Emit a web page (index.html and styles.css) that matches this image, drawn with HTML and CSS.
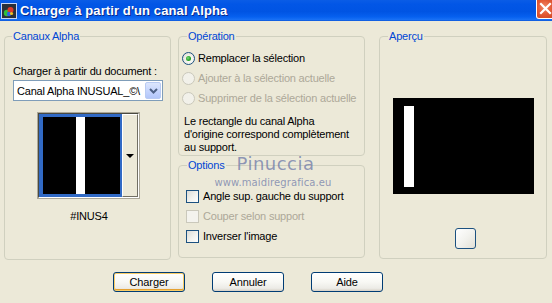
FILE: index.html
```html
<!DOCTYPE html>
<html lang="fr">
<head>
<meta charset="utf-8">
<title>Charger à partir d'un canal Alpha</title>
<link rel="stylesheet" href="styles.css">
</head>
<body>
<div class="window">
  <div class="titlebar">
    <svg class="appicon" width="16" height="16" viewBox="0 0 16 16">
      <rect x="0.5" y="0.5" width="15" height="15" fill="#2a2f3a" stroke="#c8d4f0"/>
      <circle cx="6" cy="10" r="3.2" fill="#2fbf3a"/>
      <circle cx="9.5" cy="7" r="3" fill="#e03a2a"/>
      <circle cx="8" cy="11" r="2.2" fill="#2a62e0"/>
      <circle cx="10.5" cy="10.5" r="1.6" fill="#f0c020"/>
    </svg>
    <span class="title">Charger à partir d'un canal Alpha</span>
    <div class="closebtn">
      <svg width="20" height="19" viewBox="0 0 20 19">
        <path d="M5 4 L14 13 M14 4 L5 13" stroke="#fff" stroke-width="2.2" stroke-linecap="square"/>
      </svg>
    </div>
  </div>

  <div class="content">
    <div class="columns">
      <fieldset class="group g-canaux">
        <legend>Canaux Alpha</legend>
        <div class="label">Charger à partir du document :</div>
        <div class="combo">
          <span class="combo-text">Canal Alpha INUSUAL_©\</span>
          <span class="combo-btn">
            <svg width="9" height="6" viewBox="0 0 9 6"><path d="M1 1 L4.5 4.5 L8 1" fill="none" stroke="#4d6185" stroke-width="2"/></svg>
          </span>
        </div>
        <div class="thumbwrap">
          <div class="thumb">
            <div class="thumb-sel">
              <div class="thumb-img"><div class="thumb-bar"></div></div>
            </div>
            <div class="thumb-drop"><span class="tri"></span></div>
          </div>
        </div>
        <div class="caption">#INUS4</div>
      </fieldset>

      <div class="midcol">
        <fieldset class="group g-op">
          <legend>Opération</legend>
          <div class="radio-row"><span class="radio on"></span><span>Remplacer la sélection</span></div>
          <div class="radio-row dis"><span class="radio"></span><span>Ajouter à la sélection actuelle</span></div>
          <div class="radio-row dis"><span class="radio"></span><span>Supprimer de la sélection actuelle</span></div>
          <p class="note">Le rectangle du canal Alpha<br>d'origine correspond complètement<br>au support.</p>
        </fieldset>
        <fieldset class="group g-opt">
          <legend>Options</legend>
          <div class="check-row"><span class="check"></span><span>Angle sup. gauche du support</span></div>
          <div class="check-row dis"><span class="check"></span><span>Couper selon support</span></div>
          <div class="check-row"><span class="check"></span><span>Inverser l'image</span></div>
        </fieldset>
      </div>

      <fieldset class="group g-apercu">
        <legend>Aperçu</legend>
        <div class="preview"><div class="preview-bar"></div></div>
        <div class="smallbtn"></div>
      </fieldset>
    </div>

    <div class="buttons">
      <button class="btn default">Charger</button>
      <button class="btn">Annuler</button>
      <button class="btn">Aide</button>
    </div>
  </div>

  <div class="watermark">
    <div class="wm-name">Pinuccia</div>
    <div class="wm-url">www.maidiregrafica.eu</div>
  </div>
</div>
</body>
</html>
```

FILE: styles.css
```css
* { box-sizing: border-box; }
html, body {
  margin: 0;
  padding: 0;
}
body {
  width: 552px;
  height: 303px;
  overflow: hidden;
  background: #ece9d8;
  font-family: "Liberation Sans", Arial, sans-serif;
  font-size: 11px;
  letter-spacing: -0.2px;
  color: #000;
}
.window {
  position: relative;
  width: 552px;
  height: 303px;
  background: #ece9d8;
}

/* Title bar */
.titlebar {
  height: 21px;
  display: flex;
  align-items: center;
  overflow: hidden;
  background: linear-gradient(to bottom, #0a5ce6 0%, #0256e6 20%, #0054e3 55%, #0660ef 80%, #1a72f6 95%, #0a4fd0 100%);
}
.appicon {
  flex: none;
  margin-left: 1px;
}
.title {
  margin-left: 3px;
  color: #fff;
  font-family: "Liberation Sans", Arial, sans-serif;
  font-weight: bold;
  font-size: 13px;
  letter-spacing: 0.1px;
  text-shadow: 1px 1px 0 #0a2a8c;
  white-space: nowrap;
}
.closebtn {
  margin-left: auto;
  align-self: flex-start;
  width: 21px;
  height: 19px;
  margin-right: -5px;
  border: 1px solid #fff;
  border-top: none;
  border-radius: 0 0 0 3px;
  background: radial-gradient(circle at 40% 40%, #f08a6a 0%, #e35a35 45%, #c8401e 100%);
  display: flex;
  align-items: center;
  justify-content: flex-start;
}
.closebtn svg { display: block; margin-left: -1px; }

/* Content */
.content {
  padding: 9px 0 0 4px;
}
.columns {
  display: flex;
  align-items: flex-start;
}
.group {
  margin: 0;
  border: 1px solid #d0d0bf;
  border-radius: 4px;
  min-width: 0;
}
.group legend {
  color: #0046d5;
  padding: 0 1px;
  line-height: 13px;
  font-size: 11px;
}

.g-canaux {
  width: 167px;
  height: 230px;
  padding: 0 7px 0 8px;
}
.g-canaux legend { margin-left: -1px; }
.label {
  margin-top: 22px;
  line-height: 13px;
  white-space: nowrap;
}
.combo {
  margin-top: 2px;
  height: 21px;
  border: 1px solid #7f9db9;
  background: #fff;
  display: flex;
  align-items: center;
  padding-left: 3px;
  overflow: hidden;
}
.combo-text {
  flex: 1;
  white-space: nowrap;
  overflow: hidden;
}
.combo-btn {
  flex: none;
  width: 16px;
  height: 17px;
  margin-right: 1px;
  border: 1px solid #b9cbf3;
  border-radius: 2px;
  background: linear-gradient(to bottom, #dce6fd 0%, #c3d3fd 60%, #b2c6f9 100%);
  display: flex;
  align-items: center;
  justify-content: center;
}
.thumbwrap {
  margin-top: 12px;
  display: flex;
  justify-content: center;
}
.thumb {
  display: flex;
  width: 101px;
  height: 85px;
  border: 1px solid #4a4a40;
  border-right-color: #fff;
  border-bottom-color: #fff;
  outline: 1px solid #aca899;
}
.thumb-sel {
  width: 83px;
  height: 100%;
  background: #316ac5;
  padding: 3px 2px 3px 4px;
}
.thumb-img {
  width: 100%;
  height: 100%;
  background: #000;
  display: flex;
  justify-content: flex-start;
}
.thumb-bar {
  margin-left: 33px;
  width: 9px;
  height: 100%;
  background: #fff;
}
.thumb-drop {
  flex: 1;
  background: #ece9d8;
  border-left: 1px solid #fff;
  border-top: 1px solid #fff;
  border-right: 1px solid #716f64;
  border-bottom: 1px solid #716f64;
  display: flex;
  align-items: center;
  justify-content: center;
}
.tri {
  width: 0;
  height: 0;
  border-left: 4px solid transparent;
  border-right: 4px solid transparent;
  border-top: 4px solid #000;
}
.caption {
  margin-top: 12px;
  text-align: center;
  line-height: 13px;
  padding-left: 2px;
}

/* Middle column */
.midcol {
  margin-left: 7px;
  width: 187px;
  display: flex;
  flex-direction: column;
}
.g-op {
  height: 126px;
  padding: 0 3px 0 3px;
}
.g-op legend { margin-left: 5px; }
.radio-row {
  display: flex;
  align-items: center;
  height: 20px;
  white-space: nowrap;
}
.radio-row:first-of-type { margin-top: 5px; }
.radio {
  flex: none;
  width: 13px;
  height: 13px;
  border-radius: 50%;
  border: 1px solid #1c5180;
  background: radial-gradient(circle at 60% 60%, #ffffff 0%, #f4f3ee 40%, #d8d6cb 100%);
  margin-right: 3px;
  display: flex;
  align-items: center;
  justify-content: center;
}
.radio.on::after {
  content: "";
  width: 5px;
  height: 5px;
  border-radius: 50%;
  background: radial-gradient(circle at 40% 40%, #7ad87a 0%, #21a121 60%, #198b19 100%);
}
.dis { color: #aca899; }
.dis .radio {
  border-color: #cac8bb;
  background: #f2f1ea;
}
.note {
  margin: 7px 0 0 2px;
  line-height: 13px;
  white-space: nowrap;
}

.g-opt {
  margin-top: 3px;
  height: 99px;
  padding: 0 3px 0 7px;
}
.g-opt legend { margin-left: 1px; }
.check-row {
  display: flex;
  align-items: center;
  height: 20px;
  white-space: nowrap;
}
.check-row:first-of-type { margin-top: 14px; }
.check {
  flex: none;
  width: 13px;
  height: 13px;
  border: 1px solid #1c5180;
  background: linear-gradient(135deg, #dcdcd7 0%, #f2f2ee 55%, #ffffff 100%);
  margin-right: 4px;
}
.dis .check {
  border-color: #cac8bb;
  background: #f4f3ee;
}

/* Right group */
.g-apercu {
  margin-left: 14px;
  width: 168px;
  height: 229px;
  padding: 0;
  display: flex;
  flex-direction: column;
  align-items: center;
}
.g-apercu legend { margin-left: 8px; }
.preview {
  margin-top: 55px;
  width: 141px;
  height: 96px;
  background: #000;
  padding: 8px 0 0 11px;
}
.preview-bar {
  width: 10px;
  height: 81px;
  background: #fff;
}
.smallbtn {
  margin-top: 34px;
  margin-left: 4px;
  width: 21px;
  height: 21px;
  border: 1px solid #1c5180;
  border-radius: 3px;
  background: linear-gradient(135deg, #ffffff 0%, #f2f2ee 50%, #e2e0d6 100%);
}

/* Buttons */
.buttons {
  display: flex;
  gap: 27px;
  margin-top: 12px;
  padding-left: 109px;
}
.btn {
  width: 72px;
  height: 20px;
  padding: 0;
  font-family: "Liberation Sans", Arial, sans-serif;
  font-size: 11px;
  letter-spacing: -0.1px;
  color: #000;
  border: 1px solid #003c74;
  border-radius: 3px;
  background: linear-gradient(to bottom, #ffffff 0%, #f8f8f4 50%, #ecebe6 85%, #d6d0c5 100%);
}
.btn.default {
  box-shadow: inset 0 0 0 1px #f9cd67, inset 0 -1px 0 1px #e5a131;
}

/* Watermark */
.watermark {
  position: absolute;
  left: 213px;
  top: 154px;
  width: 120px;
  text-align: center;
  color: rgba(110, 122, 168, 0.75);
  letter-spacing: 0;
  pointer-events: none;
}
.wm-name {
  font-family: "DejaVu Sans", sans-serif;
  font-size: 18px;
  line-height: 20px;
  letter-spacing: 0.5px;
  padding-left: 5px;
}
.wm-url {
  font-family: "DejaVu Sans", sans-serif;
  font-size: 10px;
  line-height: 12px;
  letter-spacing: 0.1px;
  margin-top: 3px;
}
```
